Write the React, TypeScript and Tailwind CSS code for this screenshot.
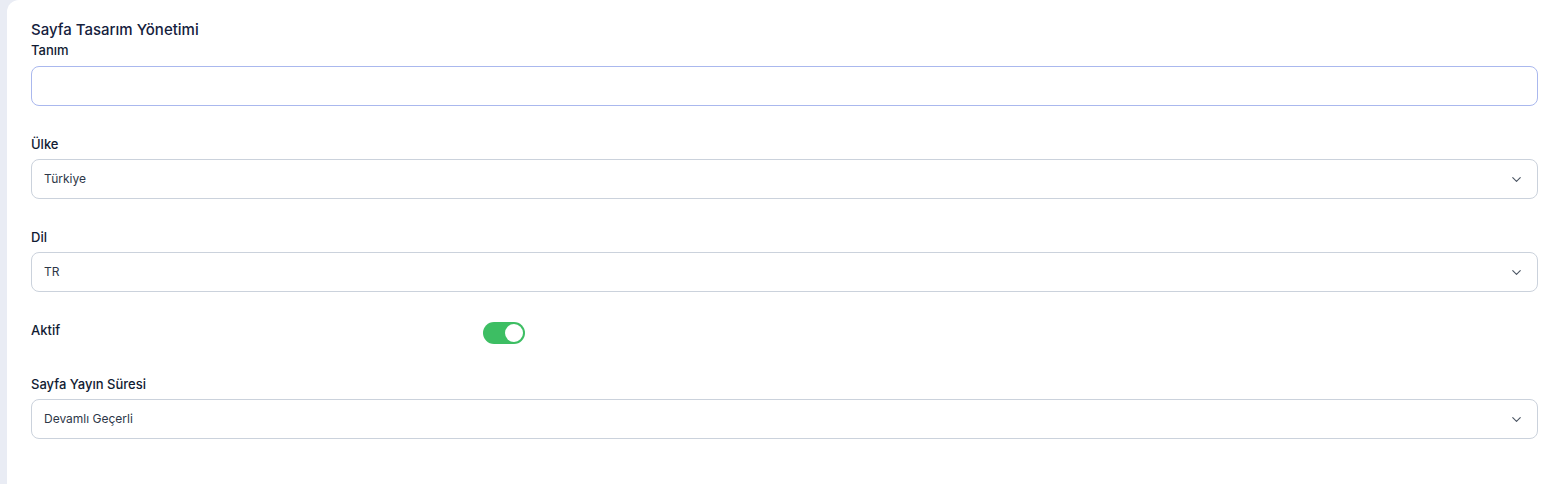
import React from "react";

const Chevron = () => (
  <svg width="15" height="15" viewBox="0 0 24 24" fill="none" stroke="#4b5563" strokeWidth="1.8" strokeLinecap="round" strokeLinejoin="round">
    <path d="M6 9l6 6 6-6" />
  </svg>
);

const Select = ({ value }: { value: string }) => (
  <div className="h-10 w-full rounded-lg border border-[#cbd2dc] bg-white flex items-center justify-between pl-3 pr-[13px]">
    <span className="text-[12px] text-[#2d3748]">{value}</span>
    <Chevron />
  </div>
);

const Label = ({ children }: { children: React.ReactNode }) => (
  <div className="text-[13px] leading-5 font-medium text-[#111b33]">{children}</div>
);

export default function App() {
  return (
    <div className="w-full h-[484px] bg-[#e9ecf4] flex overflow-hidden" style={{ fontFamily: "Inter, 'Noto Sans', sans-serif" }}>
      <div className="ml-[7px] flex-1 bg-white rounded-tl-xl pt-[20px] pl-6 pr-[19px]">
        <div className="text-[15px] leading-5 font-medium text-[#15213d]">Sayfa Tasarım Yönetimi</div>
        <div>
          <Label>Tanım</Label>
          <div className="mt-[6px] h-10 w-full rounded-lg border border-[#aab8ee] bg-white" />
        </div>
        <div className="mt-[28px]">
          <Label>Ülke</Label>
          <div className="mt-[5px]"><Select value="Türkiye" /></div>
        </div>
        <div className="mt-[28px]">
          <Label>Dil</Label>
          <div className="mt-[5px]"><Select value="TR" /></div>
        </div>
        <div className="mt-[28px] flex items-start">
          <div className="w-[452px]"><Label>Aktif</Label></div>
          <div className="mt-[2px] w-[42px] h-[22px] rounded-full bg-[#3dbe63] flex items-center justify-end pr-[2px]">
            <div className="w-[18px] h-[18px] rounded-full bg-white" />
          </div>
        </div>
        <div className="mt-[30px]">
          <Label>Sayfa Yayın Süresi</Label>
          <div className="mt-[5px]"><Select value="Devamlı Geçerli" /></div>
        </div>
      </div>
    </div>
  );
}
